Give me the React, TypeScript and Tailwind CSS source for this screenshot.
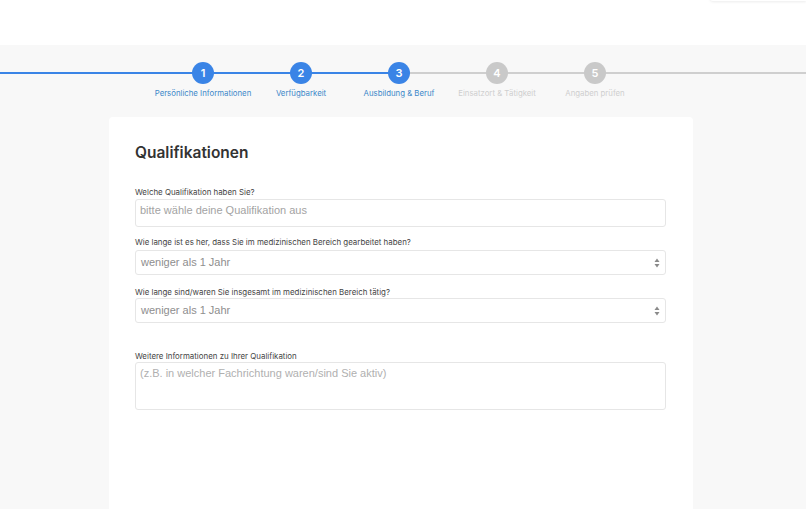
import React from "react";

const steps = [
  { n: 1, label: "Persönliche Informationen", active: true },
  { n: 2, label: "Verfügbarkeit", active: true },
  { n: 3, label: "Ausbildung & Beruf", active: true },
  { n: 4, label: "Einsatzort & Tätigkeit", active: false },
  { n: 5, label: "Angaben prüfen", active: false },
];

function Arrows() {
  return (
    <svg width="6" height="10" viewBox="0 0 6 10" className="shrink-0">
      <path d="M3 0.5 L5.5 4 L0.5 4 Z" fill="#8a8a8a" />
      <path d="M3 9.5 L5.5 6 L0.5 6 Z" fill="#8a8a8a" />
    </svg>
  );
}

export default function App() {
  const inter = { fontFamily: "Inter, 'Noto Sans', sans-serif" };
  const arial = { fontFamily: "'Liberation Sans', Arial, sans-serif" };
  return (
    <div className="w-[806px] h-[509px] overflow-hidden bg-[#f8f8f8]" style={inter}>
      <div className="h-[45px] bg-white relative">
        <div className="absolute right-0 top-[-10px] w-[96px] h-[11px] bg-white shadow-[0_1px_3px_rgba(0,0,0,0.08)] rounded-bl-[3px]" />
      </div>
      {/* stepper */}
      <div className="relative h-[72px]">
        <div className="absolute left-0 right-0 top-[27px] h-[2px] flex">
          <div className="w-[399px] bg-[#3a84e6]" />
          <div className="flex-1 bg-[#cfcfcf]" />
        </div>
        <div className="relative flex pl-[154px] pt-[17px]">
          {steps.map((s) => (
            <div key={s.n} className="w-[98px] flex flex-col items-center">
              <div
                className={`w-[22px] h-[22px] rounded-full flex items-center justify-center text-white text-[11px] font-semibold ${
                  s.active ? "bg-[#3a84e6]" : "bg-[#c9c9c9]"
                }`}
              >
                {s.n}
              </div>
              <div
                className={`mt-[3px] whitespace-nowrap text-[7.8px] leading-[12px] ${
                  s.active ? "text-[#3d88c9]" : "text-[#cfcfcf]"
                }`}
              >
                {s.label}
              </div>
            </div>
          ))}
        </div>
      </div>
      {/* card */}
      <div className="ml-[109px] w-[584px] h-[400px] bg-white rounded-t-[4px] px-[26px] pt-[25px]">
        <h1 className="text-[15.5px] leading-[22px] font-semibold text-[#333]">Qualifikationen</h1>

        <div className="mt-[23px] text-[7.9px] leading-[11px] text-[#444]">Welche Qualifikation haben Sie?</div>
        <div
          className="mt-[1px] w-[531px] h-[28px] border border-[#e6e6e6] rounded-[3px] px-[4px] pt-[3px] text-[11px] leading-[14px] text-[#a3a3a3]"
          style={arial}
        >
          bitte wähle deine Qualifikation aus
        </div>

        <div className="mt-[10px] text-[7.9px] leading-[11px] text-[#444]">
          Wie lange ist es her, dass Sie im medizinischen Bereich gearbeitet haben?
        </div>
        <div
          className="mt-[2px] w-[531px] h-[25px] border border-[#e6e6e6] rounded-[3px] pl-[5px] pr-[5px] flex items-center justify-between text-[11px] text-[#8e8e8e]"
          style={arial}
        >
          <span>weniger als 1 Jahr</span>
          <Arrows />
        </div>

        <div className="mt-[12px] text-[7.9px] leading-[11px] text-[#444]">
          Wie lange sind/waren Sie insgesamt im medizinischen Bereich tätig?
        </div>
        <div
          className="mt-[0px] w-[531px] h-[25px] border border-[#e6e6e6] rounded-[3px] pl-[5px] pr-[5px] flex items-center justify-between text-[11px] text-[#8e8e8e]"
          style={arial}
        >
          <span>weniger als 1 Jahr</span>
          <Arrows />
        </div>

        <div className="mt-[28px] text-[7.9px] leading-[11px] text-[#444]">Weitere Informationen zu Ihrer Qualifikation</div>
        <div
          className="mt-[0px] w-[531px] h-[48px] border border-[#e6e6e6] rounded-[3px] px-[4px] pt-[3px] text-[11px] leading-[14px] text-[#b0b0b0]"
          style={arial}
        >
          (z.B. in welcher Fachrichtung waren/sind Sie aktiv)
        </div>
      </div>
    </div>
  );
}
